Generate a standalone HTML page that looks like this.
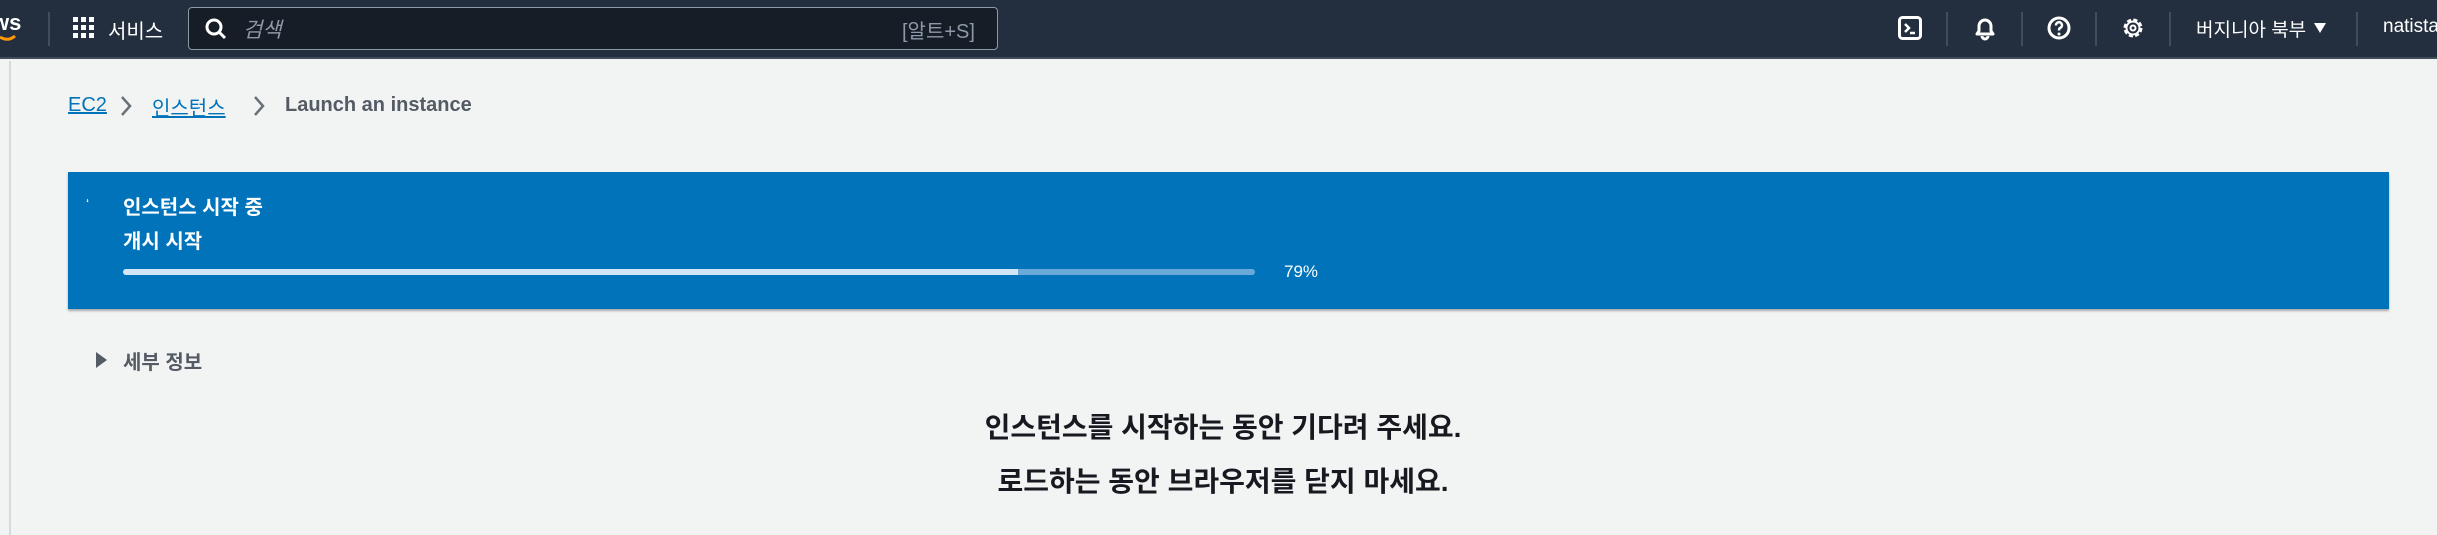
<!DOCTYPE html>
<html><head><meta charset="utf-8"><style>
*{margin:0;padding:0;box-sizing:border-box}
body{width:2437px;height:535px;background:#f2f3f3;font-family:"Liberation Sans","Noto Sans CJK KR",sans-serif;position:relative;overflow:hidden}
.hdr{position:absolute;left:0;top:0;width:2437px;height:59px;background:#232f3e;border-bottom:2px solid #414d5c}
.abs{position:absolute}
.sep{position:absolute;top:12px;width:2px;height:34px;background:#414d5c}
.w{color:#fff}
</style></head><body>
<div class="hdr">
  <div class="abs w" style="left:-8px;top:10px;font-size:22px;font-weight:bold">ws</div>
  <svg class="abs" style="left:0;top:34px" width="18" height="10"><path d="M0 3 Q8 8 15 2" stroke="#ff9900" stroke-width="3" fill="none"/></svg>
  <div class="sep" style="left:48px"></div>
  <svg class="abs" style="left:73px;top:17px" width="22" height="22" fill="#fff">
    <rect x="0" y="0" width="5" height="5"/><rect x="8" y="0" width="5" height="5"/><rect x="16" y="0" width="5" height="5"/>
    <rect x="0" y="8" width="5" height="5"/><rect x="8" y="8" width="5" height="5"/><rect x="16" y="8" width="5" height="5"/>
    <rect x="0" y="16" width="5" height="5"/><rect x="8" y="16" width="5" height="5"/><rect x="16" y="16" width="5" height="5"/>
  </svg>
  <div class="abs w" style="left:108px;top:15px;font-size:20px">서비스</div>
  <div class="abs" style="left:188px;top:7px;width:810px;height:43px;background:#161d26;border:1px solid #8d99a8;border-radius:4px"></div>
  <svg class="abs" style="left:205px;top:18px" width="22" height="22"><circle cx="9" cy="9" r="7" stroke="#fff" stroke-width="3" fill="none"/><path d="M14 14 L20 20" stroke="#fff" stroke-width="3"/></svg>
  <div class="abs" style="left:243px;top:14px;font-size:21px;color:#8d99a8;font-style:italic">검색</div>
  <div class="abs" style="left:902px;top:15px;font-size:20px;color:#8d99a8">[알트+S]</div>

  <svg class="abs" style="left:1898px;top:16px" width="24" height="24"><rect x="1.5" y="1.5" width="21" height="21" rx="3" stroke="#fff" stroke-width="3" fill="none"/><path d="M7 8 L11 12 L7 16 M12 17 H17" stroke="#fff" stroke-width="2.5" fill="none"/></svg>
  <div class="sep" style="left:1946px"></div>
  <svg class="abs" style="left:1973px;top:15px" width="24" height="26"><path d="M4 19 L6 16 V11 A6 6 0 0 1 18 11 V16 L20 19 Z" stroke="#fff" stroke-width="3" fill="none" stroke-linejoin="round"/><path d="M9 21 A3 3 0 0 0 15 21" stroke="#fff" stroke-width="3" fill="none"/></svg>
  <div class="sep" style="left:2021px"></div>
  <svg class="abs" style="left:2047px;top:16px" width="24" height="24"><circle cx="12" cy="12" r="10" stroke="#fff" stroke-width="3" fill="none"/><path d="M9 9.5 A3 3 0 1 1 13 12 Q12 12.5 12 14.5" stroke="#fff" stroke-width="2.5" fill="none"/><circle cx="12" cy="18" r="1.5" fill="#fff"/></svg>
  <div class="sep" style="left:2095px"></div>
  <svg class="abs" style="left:2121px;top:16px" width="24" height="24"><circle cx="12" cy="12" r="8" stroke="#fff" stroke-width="3" fill="none" stroke-dasharray="4 2.3"/><circle cx="12" cy="12" r="6.5" stroke="#fff" stroke-width="2" fill="none"/><circle cx="12" cy="12" r="2.5" stroke="#fff" stroke-width="2" fill="none"/></svg>
  <div class="sep" style="left:2169px"></div>
  <div class="abs w" style="left:2196px;top:15px;font-size:19px">버지니아 북부</div>
  <svg class="abs" style="left:2314px;top:23px" width="12" height="11"><path d="M0 0 H12 L6 10Z" fill="#fff"/></svg>
  <div class="sep" style="left:2356px"></div>
  <div class="abs w" style="left:2383px;top:16px;font-size:19px">natista</div>
</div>

<div class="abs" style="left:9px;top:61px;width:2px;height:474px;background:#d5dbdb"></div>

<div class="abs" style="left:68px;top:94px;font-size:20px;color:#0073bb;text-decoration:underline">EC2</div>
<svg class="abs" style="left:119px;top:95px" width="14" height="22"><path d="M3 2 L11 11 L3 20" stroke="#687078" stroke-width="2.5" fill="none"/></svg>
<div class="abs" style="left:152px;top:92px;font-size:20px;color:#0073bb;text-decoration:underline">인스턴스</div>
<svg class="abs" style="left:252px;top:95px" width="14" height="22"><path d="M3 2 L11 11 L3 20" stroke="#687078" stroke-width="2.5" fill="none"/></svg>
<div class="abs" style="left:285px;top:94px;font-size:20px;color:#545b64;font-weight:bold">Launch an instance</div>

<div class="abs" style="left:68px;top:172px;width:2321px;height:137px;background:#0073bb;box-shadow:0 2px 2px rgba(0,0,0,.3)"></div>
<div class="abs w" style="left:86px;top:196px;font-size:14px">ʻ</div>
<div class="abs w" style="left:123px;top:191px;font-size:20px;font-weight:bold">인스턴스 시작 중</div>
<div class="abs w" style="left:123px;top:225px;font-size:20px;font-weight:bold">개시 시작</div>
<div class="abs" style="left:123px;top:269px;width:1132px;height:6px;background:#6aaad8;border-radius:3px"></div>
<div class="abs" style="left:123px;top:269px;width:895px;height:6px;background:#d3e6f5;border-radius:3px 0 0 3px"></div>
<div class="abs w" style="left:1284px;top:262px;font-size:17px">79%</div>

<svg class="abs" style="left:96px;top:352px" width="12" height="16"><path d="M0 0 L11 8 L0 16Z" fill="#545b64"/></svg>
<div class="abs" style="left:123px;top:346px;font-size:20px;color:#545b64;font-weight:bold">세부 정보</div>

<div class="abs" style="left:0;top:406px;width:2446px;text-align:center;font-size:28px;font-weight:bold;color:#16191f">인스턴스를 시작하는 동안 기다려 주세요.</div>
<div class="abs" style="left:0;top:460px;width:2446px;text-align:center;font-size:28px;font-weight:bold;color:#16191f">로드하는 동안 브라우저를 닫지 마세요.</div>
</body></html>
